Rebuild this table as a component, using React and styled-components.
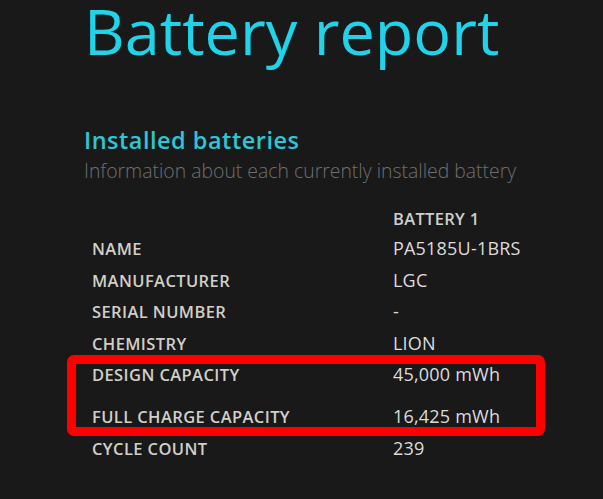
import React from "react";
import styled, { createGlobalStyle } from "styled-components";

const GlobalStyle = createGlobalStyle`
    body {
        margin: 0;
        background: #191919;
        font-family: "Open Sans", "Noto Sans", sans-serif;
    }
`;

const rows = [
    { label: "NAME", value: "PA5185U-1BRS" },
    { label: "MANUFACTURER", value: "LGC" },
    { label: "SERIAL NUMBER", value: "-" },
    { label: "CHEMISTRY", value: "LION" },
    { label: "DESIGN CAPACITY", value: "45,000 mWh", tall: true },
    { label: "FULL CHARGE CAPACITY", value: "16,425 mWh" },
    { label: "CYCLE COUNT", value: "239" },
];

const App = () => {
    return (
        <Page>
            <GlobalStyle />
            <Title>Battery report</Title>
            <SectionTitle>Installed batteries</SectionTitle>
            <SectionInfo>Information about each currently installed battery</SectionInfo>
            <Table>
                <Row $header>
                    <span />
                    <HeaderCell>BATTERY 1</HeaderCell>
                </Row>
                {rows.map((r) => (
                    <Row key={r.label} $tall={r.tall}>
                        <Label>{r.label}</Label>
                        <Value>{r.value}</Value>
                    </Row>
                ))}
                <Highlight />
            </Table>
        </Page>
    );
};

const Page = styled.div`
    width: 603px;
    height: 499px;
    box-sizing: border-box;
    padding-left: 84px;
    overflow: hidden;
`;

const Title = styled.h1`
    margin: 0;
    font-size: 63px;
    line-height: 62px;
    font-weight: 400;
    color: #20d3e9;
`;

const SectionTitle = styled.h2`
    margin: 63px 0 0 0;
    font-size: 23.5px;
    line-height: 30px;
    font-weight: 600;
    letter-spacing: 0.5px;
    color: #2cc6d4;
`;

const SectionInfo = styled.div`
    margin-top: 3px;
    font-size: 19.4px;
    line-height: 26px;
    font-weight: 300;
    color: #6f6f6f;
`;

const Table = styled.div`
    position: relative;
    margin: 20px 0 0 8px;
`;

const Row = styled.div`
    display: grid;
    grid-template-columns: 301px auto;
    height: ${(p) => (p.$header ? "29px" : p.$tall ? "42px" : "31.5px")};
    line-height: ${(p) => (p.$header ? "29px" : "31.5px")};
    white-space: nowrap;
`;

const HeaderCell = styled.span`
    font-size: 16.5px;
    font-weight: 600;
    letter-spacing: 0.3px;
    color: #cfcfcf;
`;

const Label = styled.span`
    font-size: 16.5px;
    font-weight: 600;
    letter-spacing: 0.4px;
    color: #d2cfc8;
`;

const Value = styled.span`
    font-size: 18px;
    font-weight: 400;
    letter-spacing: 0.2px;
    color: #dcdcdc;
`;

const Highlight = styled.div`
    position: absolute;
    left: -25px;
    top: 150.5px;
    width: 478px;
    height: 81px;
    box-sizing: border-box;
    border: 9px solid #ff0000;
    border-radius: 7px;
    pointer-events: none;
`;

export default App;
